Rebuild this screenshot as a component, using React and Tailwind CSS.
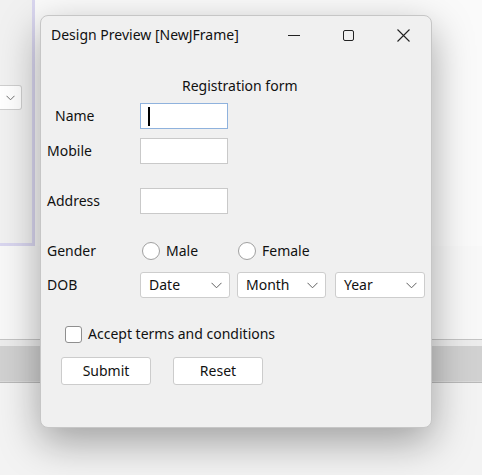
import React from "react";

const font = { fontFamily: '"Noto Sans", "Open Sans", sans-serif' };

function Chevron() {
  return (
    <svg width="11" height="7" viewBox="0 0 11 7" className="shrink-0">
      <path d="M0.5 0.8 L5.5 5.8 L10.5 0.8" fill="none" stroke="#606060" strokeWidth="1" />
    </svg>
  );
}

function Combo({ label, w }) {
  return (
    <div className={`h-[26px] ${w} bg-white border border-[#cdcdcd] rounded-[3px] flex items-center justify-between pl-[8px] pr-[7px]`}>
      <span className="text-[14px] leading-none text-[#111]">{label}</span>
      <Chevron />
    </div>
  );
}

function Field({ focused }) {
  return (
    <div
      className={`w-[88px] h-[26px] bg-white flex items-center pl-[7px] ${
        focused ? "border-[1.5px] border-[#8fb2dd]" : "border border-[#c9c9c9]"
      }`}
    >
      {focused && <div className="w-[2px] h-[19px] bg-black" />}
    </div>
  );
}

function Radio({ label }) {
  return (
    <div className="flex items-center gap-[6px]">
      <div className="w-[18px] h-[18px] rounded-full bg-white border border-[#a0a0a0]" />
      <span className="text-[14px] leading-none text-[#111]">{label}</span>
    </div>
  );
}

export default function App() {
  return (
    <div className="relative w-[482px] h-[475px] overflow-hidden bg-[#f9f9f9]" style={font}>
      {/* desktop / IDE background */}
      <div className="flex flex-col w-full h-full">
        <div className="flex h-[246px]">
          <div className="w-[35px] h-full bg-[#f1f1f1] border-r-[3px] border-b-[3px] border-[#d9d6ef] pt-[85px]">
            <div className="w-[22px] h-[25px] bg-white border border-l-0 border-[#cfcfcf] rounded-r-[3px] flex items-center justify-center">
              <svg width="9" height="6" viewBox="0 0 9 6">
                <path d="M0.5 0.8 L4.5 4.8 L8.5 0.8" fill="none" stroke="#707070" strokeWidth="1" />
              </svg>
            </div>
          </div>
          <div className="flex-1 bg-[#fafafa]" />
        </div>
        <div className="h-[93px] bg-[#f8f8f8]" />
        <div className="h-[1px] bg-[#c4c4c4]" />
        <div className="h-[6px] bg-[#ececec]" />
        <div className="h-[35px] bg-[#d1d1d1]" />
        <div className="h-[1px] bg-[#dadada]" />
        <div className="h-[1px] bg-[#b9b9b9]" />
        <div className="flex-1 bg-[#f3f3f3]" />
      </div>

      {/* window */}
      <div className="absolute left-[40px] top-[15px] w-[392px] h-[413px] bg-[#f0f0f0] border border-[#c6c6c6] rounded-[8px] shadow-[0_14px_40px_rgba(0,0,0,0.35)] flex flex-col">
        {/* title bar */}
        <div className="h-[36px] flex items-center pl-[10px] pt-[2px]">
          <span className="text-[14px] leading-none text-[#111] flex-1">Design Preview [NewJFrame]</span>
          <div className="w-[55px] flex justify-center">
            <div className="w-[12px] h-[1px] bg-[#222]" />
          </div>
          <div className="w-[55px] flex justify-center">
            <div className="w-[11px] h-[11px] border border-[#222] rounded-[2px]" />
          </div>
          <div className="w-[55px] flex justify-center">
            <svg width="13" height="13" viewBox="0 0 13 13">
              <path d="M0.5 0.5 L12.5 12.5 M12.5 0.5 L0.5 12.5" stroke="#222" strokeWidth="1.1" />
            </svg>
          </div>
        </div>

        {/* form */}
        <div className="flex flex-col text-[#111]">
          <div className="h-[14px] mt-[27px] pl-[141px] flex items-center">
            <span className="text-[14px] leading-none">Registration form</span>
          </div>
          <div className="flex items-center mt-[10px] h-[26px]">
            <span className="w-[99px] pl-[14px] text-[14px] leading-none">Name</span>
            <Field focused />
          </div>
          <div className="flex items-center mt-[9px] h-[26px]">
            <span className="w-[99px] pl-[6px] text-[14px] leading-none">Mobile</span>
            <Field />
          </div>
          <div className="flex items-center mt-[24px] h-[26px]">
            <span className="w-[99px] pl-[6px] text-[14px] leading-none">Address</span>
            <Field />
          </div>
          <div className="flex items-center mt-[24px] h-[26px]">
            <span className="w-[100px] pl-[6px] text-[14px] leading-none">Gender</span>
            <div className="ml-[1px] w-[96px]">
              <Radio label="Male" />
            </div>
            <Radio label="Female" />
          </div>
          <div className="flex items-center mt-[8px] h-[26px]">
            <span className="w-[99px] pl-[6px] text-[14px] leading-none">DOB</span>
            <Combo label="Date" w="w-[90px]" />
            <div className="ml-[7px]">
              <Combo label="Month" w="w-[89px]" />
            </div>
            <div className="ml-[9px]">
              <Combo label="Year" w="w-[90px]" />
            </div>
          </div>
          <div className="flex items-center mt-[27px] h-[18px] pl-[24px] gap-[6px]">
            <div className="w-[17px] h-[17px] bg-white border border-[#8f8f8f] rounded-[3px]" />
            <span className="text-[14px] leading-none">Accept terms and conditions</span>
          </div>
          <div className="flex items-center mt-[14px] pl-[20px] gap-[22px]">
            <div className="w-[90px] h-[28px] bg-white border border-[#cccccc] rounded-[3px] flex items-center justify-center text-[14px] leading-none">
              Submit
            </div>
            <div className="w-[90px] h-[28px] bg-white border border-[#cccccc] rounded-[3px] flex items-center justify-center text-[14px] leading-none">
              Reset
            </div>
          </div>
        </div>
      </div>
    </div>
  );
}
